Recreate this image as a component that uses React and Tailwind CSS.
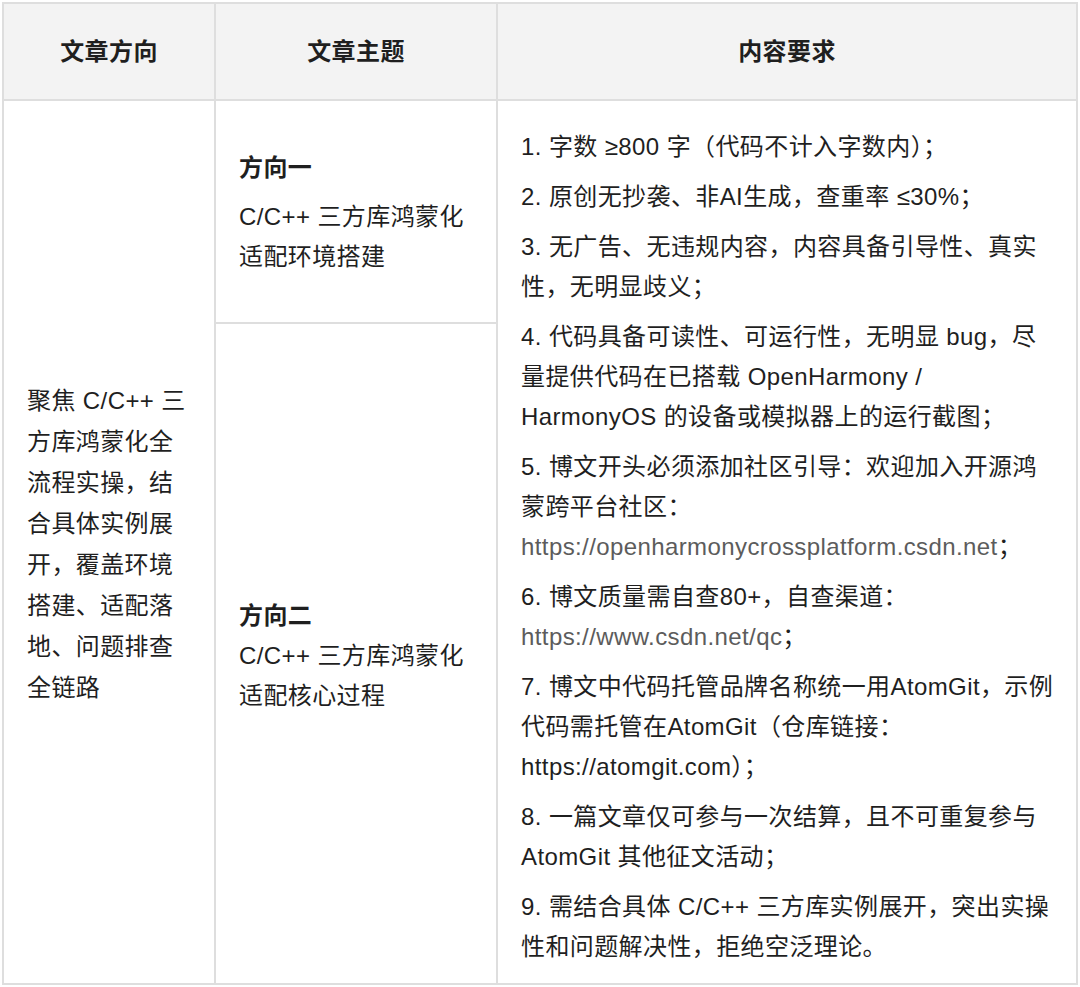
const requirements = [
  ['1. 字数 ≥800 字（代码不计入字数内）；'],
  ['2. 原创无抄袭、非AI生成，查重率 ≤30%；'],
  ['3. 无广告、无违规内容，内容具备引导性、真实', '性，无明显歧义；'],
  [
    '4. 代码具备可读性、可运行性，无明显 bug，尽',
    '量提供代码在已搭载 OpenHarmony /',
    'HarmonyOS 的设备或模拟器上的运行截图；',
  ],
  [
    '5. 博文开头必须添加社区引导：欢迎加入开源鸿',
    '蒙跨平台社区：',
    { url: 'https://openharmonycrossplatform.csdn.net', tail: '；' },
  ],
  ['6. 博文质量需自查80+，自查渠道：', { url: 'https://www.csdn.net/qc', tail: '；' }],
  [
    '7. 博文中代码托管品牌名称统一用AtomGit，示例',
    '代码需托管在AtomGit（仓库链接：',
    'https://atomgit.com）；',
  ],
  ['8. 一篇文章仅可参与一次结算，且不可重复参与', 'AtomGit 其他征文活动；'],
  ['9. 需结合具体 C/C++ 三方库实例展开，突出实操', '性和问题解决性，拒绝空泛理论。'],
]

const focusLines = [
  '聚焦 C/C++ 三',
  '方库鸿蒙化全',
  '流程实操，结',
  '合具体实例展',
  '开，覆盖环境',
  '搭建、适配落',
  '地、问题排查',
  '全链路',
]

function Line({ line }) {
  if (typeof line === 'string') {
    return <div className="whitespace-nowrap">{line}</div>
  }
  return (
    <div className="whitespace-nowrap">
      <span className="text-[#5c5c5c]">{line.url}</span>
      {line.tail}
    </div>
  )
}

function Topic({ title, lines, gap }) {
  return (
    <div className="leading-[40px]">
      <div className={`font-bold ${gap}`}>{title}</div>
      {lines.map((l) => (
        <div key={l} className="whitespace-nowrap">
          {l}
        </div>
      ))}
    </div>
  )
}

export default function App() {
  return (
    <div className="w-[1080px] h-[987px] bg-white pt-[2px] pl-[2px] font-['Liberation_Sans','Noto_Sans_CJK_SC',sans-serif] text-[24px] tracking-[0.4px] text-[#1f1f1f]">
      <div className="w-[1076px] border-2 border-[#dedede] flex flex-col">
        {/* header */}
        <div className="flex h-[97px] bg-[#f3f3f3] border-b-2 border-[#dedede] font-bold">
          <div className="w-[210px] flex items-center justify-center">文章方向</div>
          <div className="w-[282px] border-l-2 border-[#dedede] flex items-center justify-center">文章主题</div>
          <div className="flex-1 border-l-2 border-[#dedede] flex items-center justify-center">内容要求</div>
        </div>

        {/* body */}
        <div className="flex h-[882px]">
          <div className="w-[210px] flex items-center pl-[23px] pt-[4px]">
            <div className="leading-[41px]">
              {focusLines.map((l) => (
                <div key={l} className="whitespace-nowrap">
                  {l}
                </div>
              ))}
            </div>
          </div>

          <div className="w-[282px] border-l-2 border-[#dedede] flex flex-col">
            <div className="h-[223px] border-b-2 border-[#dedede] flex items-center pl-[23px] pt-[2px]">
              <Topic title="方向一" lines={['C/C++ 三方库鸿蒙化', '适配环境搭建']} gap="mb-[9px]" />
            </div>
            <div className="flex-1 flex items-center pl-[23px] pt-[5px]">
              <Topic title="方向二" lines={['C/C++ 三方库鸿蒙化', '适配核心过程']} gap="mb-0" />
            </div>
          </div>

          <div className="flex-1 border-l-2 border-[#dedede] pl-[23px] pt-[26px] flex flex-col gap-[10px] leading-[40px]">
            {requirements.map((item, i) => (
              <div key={i}>
                {item.map((line, j) => (
                  <Line key={j} line={line} />
                ))}
              </div>
            ))}
          </div>
        </div>
      </div>
    </div>
  )
}
